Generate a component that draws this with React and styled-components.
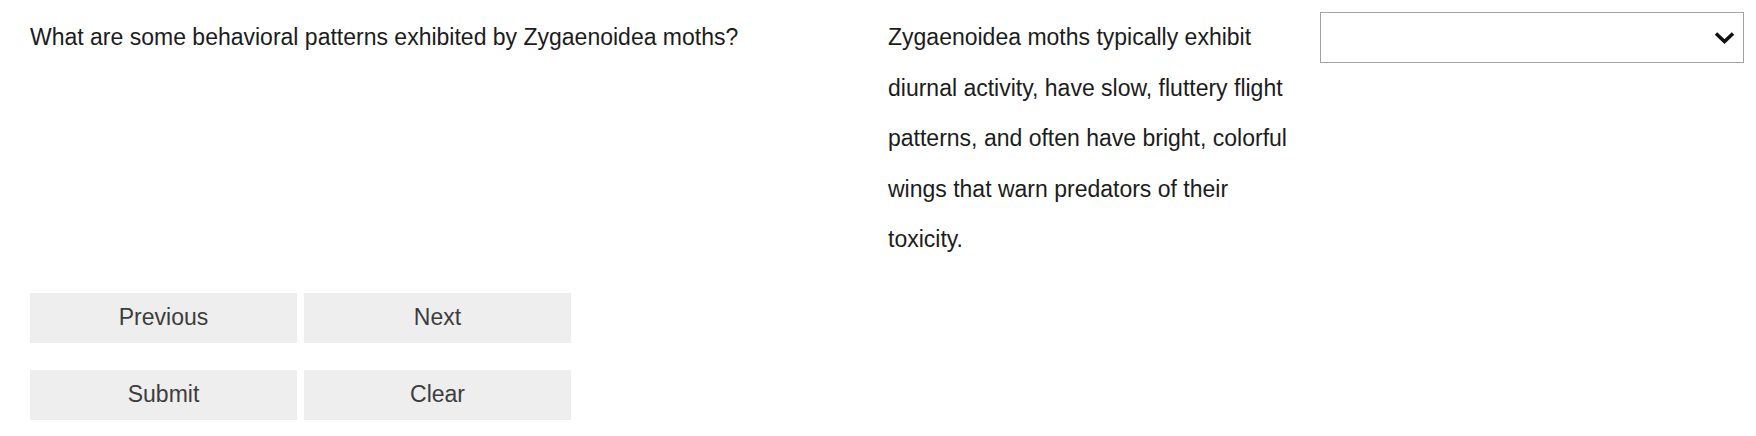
import React from "react";
import styled, { createGlobalStyle } from "styled-components";

const GlobalStyle = createGlobalStyle`
  body {
    margin: 0;
    background: #fff;
    font-family: "Liberation Sans", Arial, sans-serif;
    color: #1c1c1c;
  }
`;

const Page = styled.div`
  padding: 12px 12px 0 30px;
`;
const QuestionRow = styled.div`
  display: grid;
  grid-template-columns: 858px 432px 424px;
  align-items: start;
`;
const Question = styled.p`
  margin: 0;
  font-size: 23px;
  line-height: 2.2;
`;
const Answer = styled.p`
  margin: 0;
  font-size: 23px;
  line-height: 2.2;
  padding-right: 12px;
`;
const Select = styled.div`
  box-sizing: border-box;
  height: 51px;
  border: 1px solid #a3a3a3;
  display: flex;
  align-items: center;
  justify-content: flex-end;
  padding-right: 8px;
`;
const Buttons = styled.div`
  display: grid;
  grid-template-columns: repeat(2, 267px);
  column-gap: 7px;
  row-gap: 27px;
  margin-top: 28px;
`;
const Button = styled.button`
  height: 50px;
  border: none;
  background: #eeeeee;
  color: #3d3d3d;
  font-family: "Liberation Sans", Arial, sans-serif;
  font-size: 23px;
  padding: 0;
`;

export default function App() {
  return (
    <>
      <GlobalStyle />
      <Page>
        <QuestionRow>
          <Question>What are some behavioral patterns exhibited by Zygaenoidea moths?</Question>
          <Answer>
            Zygaenoidea moths typically exhibit diurnal activity, have slow, fluttery flight patterns,
            and often have bright, colorful wings that warn predators of their toxicity.
          </Answer>
          <Select>
            <svg width="21" height="13" viewBox="0 0 21 13">
              <path d="M2 2.5 L10.5 10.5 L19 2.5" fill="none" stroke="#111" strokeWidth="3.5" />
            </svg>
          </Select>
        </QuestionRow>
        <Buttons>
          <Button>Previous</Button>
          <Button>Next</Button>
          <Button>Submit</Button>
          <Button>Clear</Button>
        </Buttons>
      </Page>
    </>
  );
}
